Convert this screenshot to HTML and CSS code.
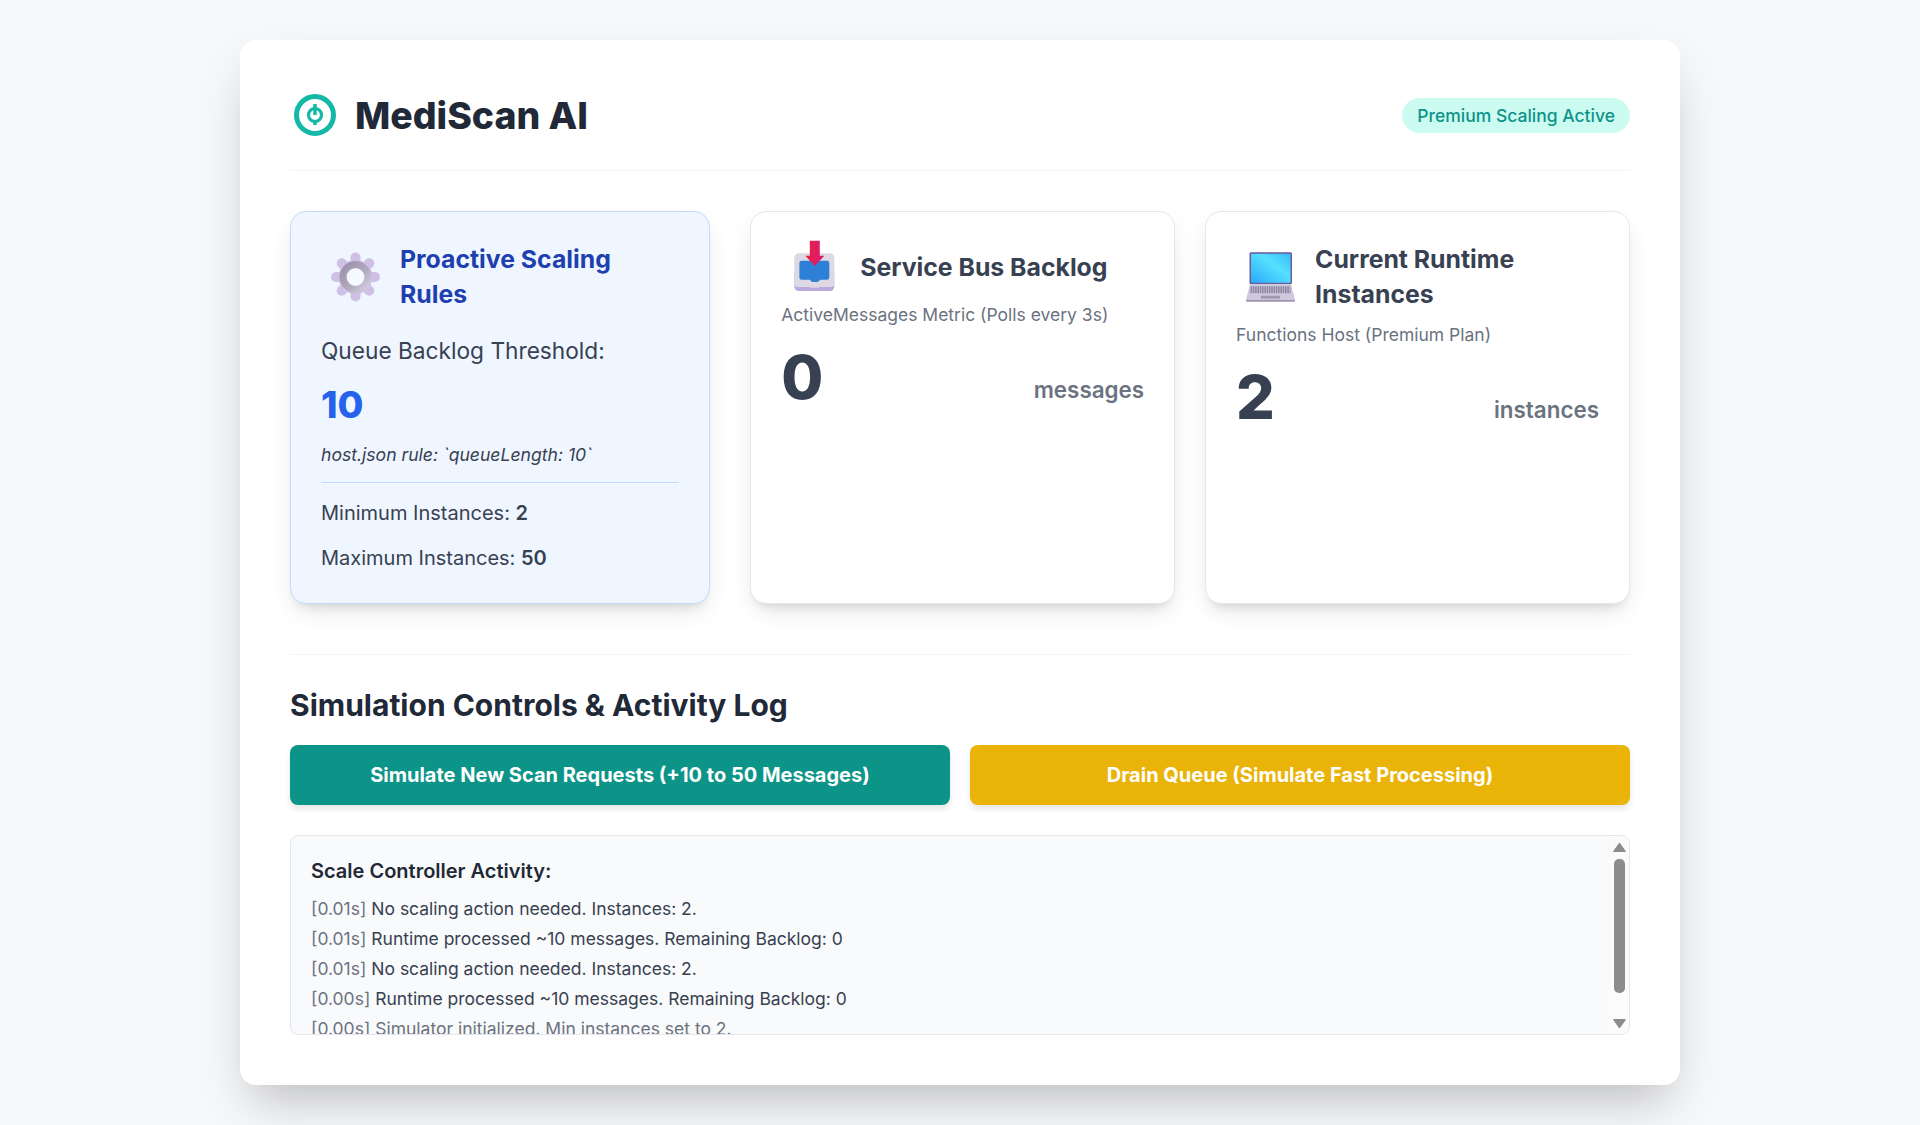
FILE: index.html
```html
<!DOCTYPE html>
<html lang="en">
<head>
    <meta charset="UTF-8">
    <meta name="viewport" content="width=device-width, initial-scale=1.0">
    <title>MediScan AI</title>
    <link rel="stylesheet" href="styles.css">
</head>
<body>
    <div class="container">
        <header class="header">
            <div class="brand">
                <svg class="brand-icon" viewBox="0 0 50 50" fill="none">
                    <circle cx="25" cy="25" r="18.500" stroke="#14b8a6" stroke-width="5"/>
                    <circle cx="25" cy="25" r="6.500" stroke="#14b8a6" stroke-width="3.200"/>
                    <path d="M25 14v11M25 32v3" stroke="#14b8a6" stroke-width="3.500"/>
                </svg>
                <h1>MediScan AI</h1>
            </div>
            <span class="badge">Premium Scaling Active</span>
        </header>

        <div class="cards">
            <div class="card card-rules">
                <div class="card-head">
                    <svg class="card-icon" viewBox="0 0 49 50">
                        <defs>
                            <linearGradient id="gearRing" x1="0" y1="0" x2="1" y2="1">
                                <stop offset="0" stop-color="#9a92a8"/>
                                <stop offset="0.6" stop-color="#b3abc0"/>
                                <stop offset="1" stop-color="#d6cfe0"/>
                            </linearGradient>
                        </defs>
                        <g fill="#cfc1e5">
                            <circle cx="24.500" cy="25" r="17"/>
                            <rect x="19.500" y="0.500" width="10" height="49" rx="5"/>
                            <rect x="19.500" y="0.500" width="10" height="49" rx="5" transform="rotate(45 24.500 25)"/>
                            <rect x="19.500" y="0.500" width="10" height="49" rx="5" transform="rotate(90 24.500 25)"/>
                            <rect x="19.500" y="0.500" width="10" height="49" rx="5" transform="rotate(135 24.500 25)"/>
                        </g>
                        <circle cx="24.500" cy="25" r="12.500" fill="none" stroke="url(#gearRing)" stroke-width="7"/>
                        <circle cx="24.500" cy="25" r="8.800" fill="#f6f8ff"/>
                    </svg>
                    <h2 class="rules-title">Proactive Scaling Rules</h2>
                </div>
                <p class="threshold-label">Queue Backlog Threshold:</p>
                <div class="threshold-value">10</div>
                <p class="rule-note">host.json rule: `queueLength: 10`</p>
                <div class="limits">
                    <p>Minimum Instances: <strong>2</strong></p>
                    <p>Maximum Instances: <strong>50</strong></p>
                </div>
            </div>

            <div class="card">
                <div class="card-head">
                    <svg class="card-icon" viewBox="0 0 49 50">
                        <defs>
                            <linearGradient id="arrowFill" x1="0" y1="0" x2="1" y2="0">
                                <stop offset="0" stop-color="#e8213f"/>
                                <stop offset="1" stop-color="#d81b78"/>
                            </linearGradient>
                        </defs>
                        <path fill="#bba8dc" d="M3.300 30h40v14.500a4.500 4.500 0 0 1-4.500 4.500h-31a4.500 4.500 0 0 1-4.500-4.500z"/>
                        <path fill="#dcd8e4" d="M7.800 11.300h31a4.500 4.500 0 0 1 4.500 4.500V41.500a3.500 3.500 0 0 1-3.500 3.500H30c-1.500 0-2 .8-3 .8h-6.500c-1 0-1.500-.8-3-.8H6.800a3.500 3.500 0 0 1-3.500-3.500V15.800a4.500 4.500 0 0 1 4.500-4.500z"/>
                        <path fill="#2d80d6" d="M10.700 18.700H36a2.300 2.300 0 0 1 2.300 2.300v14.500a2.300 2.300 0 0 1-2.300 2.300h-5.500c-1.500 0-2 .6-2.500 1.300-.5.600-1.200.9-2 .9h-4c-.8 0-1.500-.3-2-.9-.5-.7-1-1.300-2.500-1.300h-6.800a2.300 2.300 0 0 1-2.300-2.300V21a2.300 2.300 0 0 1 2.300-2.300z"/>
                        <path fill="url(#arrowFill)" d="M18.800-1.300h10v15h4.500L23.800 24l-9.500-10.300h4.500z"/>
                    </svg>
                    <h2>Service Bus Backlog</h2>
                </div>
                <p class="card-sub">ActiveMessages Metric (Polls every 3s)</p>
                <div class="metric">
                    <span class="metric-value">0</span>
                    <span class="metric-unit">messages</span>
                </div>
            </div>

            <div class="card">
                <div class="card-head">
                    <svg class="card-icon" viewBox="0 0 49 50">
                        <defs>
                            <linearGradient id="screenFill" x1="0" y1="1" x2="1" y2="0">
                                <stop offset="0" stop-color="#2aa8f8"/>
                                <stop offset="0.6" stop-color="#55e0ff"/>
                                <stop offset="1" stop-color="#38bdf8"/>
                            </linearGradient>
                        </defs>
                        <rect x="3.500" y="0.300" width="42.500" height="32" rx="1.500" fill="#6a5b9c"/>
                        <rect x="5" y="1.800" width="39.500" height="29" fill="url(#screenFill)"/>
                        <path fill="#cfc8dc" d="M4 32.300h41L49 48H0z"/>
                        <path fill="#9d95ad" d="M0 48h49v.7a1 1 0 0 1-1 1H1a1 1 0 0 1-1-1z"/>
                        <path stroke="#8f87a0" stroke-width="7" stroke-dasharray="1.600 .7" fill="none" d="M4.500 37.700h40"/>
                        <rect x="15" y="43.700" width="19" height="3" fill="#a19ab0"/>
                    </svg>
                    <h2>Current Runtime Instances</h2>
                </div>
                <p class="card-sub">Functions Host (Premium Plan)</p>
                <div class="metric">
                    <span class="metric-value">2</span>
                    <span class="metric-unit">instances</span>
                </div>
            </div>
        </div>

        <section class="controls">
            <h2 class="controls-title">Simulation Controls &amp; Activity Log</h2>
            <div class="buttons">
                <button class="btn btn-teal">Simulate New Scan Requests (+10 to 50 Messages)</button>
                <button class="btn btn-amber">Drain Queue (Simulate Fast Processing)</button>
            </div>
            <div class="log">
                <div class="log-scroll">
                    <h3>Scale Controller Activity:</h3>
                    <p><span class="time">[0.01s]</span> No scaling action needed. Instances: 2.</p>
                    <p><span class="time">[0.01s]</span> Runtime processed ~10 messages. Remaining Backlog: 0</p>
                    <p><span class="time">[0.01s]</span> No scaling action needed. Instances: 2.</p>
                    <p><span class="time">[0.00s]</span> Runtime processed ~10 messages. Remaining Backlog: 0</p>
                    <p class="log-old"><span class="time">[0.00s]</span> Simulator initialized. Min instances set to 2.</p>
                </div>
                <div class="scrollbar">
                    <svg class="scroll-arrow" viewBox="0 0 13 10"><path d="M6.500 1 12.500 9.500H.5z" stroke="#8c8c8c" stroke-linejoin="round" fill="#8c8c8c"/></svg>
                    <div class="scroll-track"><div class="scroll-thumb"></div></div>
                    <svg class="scroll-arrow" viewBox="0 0 13 10"><path d="M.5.5H12.500L6.500 9z" stroke="#8c8c8c" stroke-linejoin="round" fill="#8c8c8c"/></svg>
                </div>
            </div>
        </section>
    </div>
</body>
</html>
```

FILE: styles.css
```css
* {
    box-sizing: border-box;
}
body {
    margin: 0;
    padding: 40px;
    font-family: Inter, sans-serif;
    background-color: #f7f8fa;
    color: #1f2937;
}
.container {
    max-width: 1440px;
    margin: 0 auto;
    padding: 50px;
    background: white;
    border-radius: 16px;
    box-shadow: 0 25px 50px -12px rgba(0,0,0,0.25);
}
.header {
    display: flex;
    justify-content: space-between;
    align-items: center;
    padding-bottom: 30px;
    margin-bottom: 40px;
    border-bottom: 1px solid #f3f4f6;
}
.brand {
    display: flex;
    align-items: center;
    gap: 15px;
}
.brand-icon {
    width: 50px;
    height: 50px;
}
.brand h1 {
    margin: 0;
    font-size: 37.4px;
    font-weight: 800;
    color: #1f2937;
}
.badge {
    padding: 7px 15px;
    border-radius: 18px;
    background: #ccfbf1;
    color: #0d9488;
    font-size: 17.5px;
    font-weight: 500;
}
.cards {
    display: grid;
    grid-template-columns: 430.2px 1fr 1fr;
    gap: 30px;
    padding-bottom: 50px;
    margin-bottom: 29.5px;
    border-bottom: 1px solid #f3f4f6;
}
.card {
    height: 392.5px;
    padding: 30px;
    background: white;
    border: 1px solid #e5e7eb;
    border-radius: 16px;
    box-shadow: 0 10px 25px -5px rgba(0,0,0,0.12), 0 8px 10px -6px rgba(0,0,0,0.1);
}
.card-rules {
    margin-right: 10.5px;
    background: #eff6ff;
    border-color: #bfdbfe;
}
.card-head {
    display: flex;
    align-items: center;
    gap: 20px;
    margin-bottom: 10px;
}
.card-icon {
    flex: none;
    width: 49px;
    height: 50px;
    margin-left: 10px;
    overflow: visible;
}
.card-head h2 {
    margin: 0;
    font-size: 24.8px;
    font-weight: 700;
    line-height: 35px;
    color: #374151;
}
.card-head .rules-title {
    color: #1e40af;
}
.threshold-label {
    margin: 24px 0 0;
    font-size: 22.7px;
    line-height: 30px;
    color: #374151;
}
.threshold-value {
    margin-top: 16px;
    font-size: 37.5px;
    line-height: 46px;
    font-weight: 800;
    color: #2563eb;
}
.rule-note {
    margin: 14px 0 0;
    padding-bottom: 14px;
    font-size: 17.6px;
    line-height: 26px;
    font-style: italic;
    color: #374151;
    border-bottom: 1px solid #bfdbfe;
}
.limits p {
    margin: 15px 0 0;
    font-size: 20px;
    line-height: 30px;
    color: #374151;
}
.limits strong {
    font-weight: 600;
}
.card-sub {
    margin: 0;
    font-size: 17.5px;
    line-height: 25px;
    color: #6b7280;
}
.metric {
    display: flex;
    justify-content: space-between;
    align-items: flex-end;
    margin-top: 20px;
}
.metric-value {
    font-size: 60.8px;
    line-height: 61px;
    font-weight: 800;
    color: #374151;
}
.metric-unit {
    padding-bottom: 5px;
    font-size: 22.4px;
    line-height: 27px;
    font-weight: 600;
    color: #6b7280;
}
.controls-title {
    margin: 0 0 19px;
    font-size: 30px;
    line-height: 42px;
    font-weight: 700;
    color: #1f2937;
}
.buttons {
    display: grid;
    grid-template-columns: 1fr 1fr;
    gap: 20px;
    margin-bottom: 30px;
}
.btn {
    height: 60px;
    border: 0;
    border-radius: 8px;
    font-family: inherit;
    font-size: 20px;
    font-weight: 700;
    color: white;
    box-shadow: 0 4px 6px rgba(0,0,0,0.1);
}
.btn-teal {
    background: #0d9488;
}
.btn-amber {
    background: #eab308;
}
.log {
    position: relative;
    height: 200px;
    overflow: hidden;
    background: #f9fafb;
    border: 1px solid #e5e7eb;
    border-radius: 8px;
}
.log-scroll {
    height: 100%;
    padding: 20px;
    overflow: hidden;
}
.log h3 {
    margin: 0 0 8px;
    font-size: 20px;
    line-height: 30px;
    font-weight: 600;
    color: #1f2937;
}
.log p {
    margin: 0;
    font-size: 17.5px;
    line-height: 30px;
    color: #374151;
}
.log .log-old {
    color: #6b7280;
}
.time {
    color: #6b7280;
}
.scrollbar {
    position: absolute;
    top: 0;
    right: 0;
    bottom: 0;
    width: 19px;
    padding: 6px 3px 5px;
    display: flex;
    flex-direction: column;
    background: #fbfbfc;
}
.scroll-arrow {
    flex: none;
    width: 13px;
    height: 10px;
}
.scroll-track {
    flex: 1;
    padding-top: 7px;
}
.scroll-thumb {
    width: 11px;
    height: 134px;
    margin-left: 1px;
    border-radius: 5px;
    background: #8c8c8c;
}
```
